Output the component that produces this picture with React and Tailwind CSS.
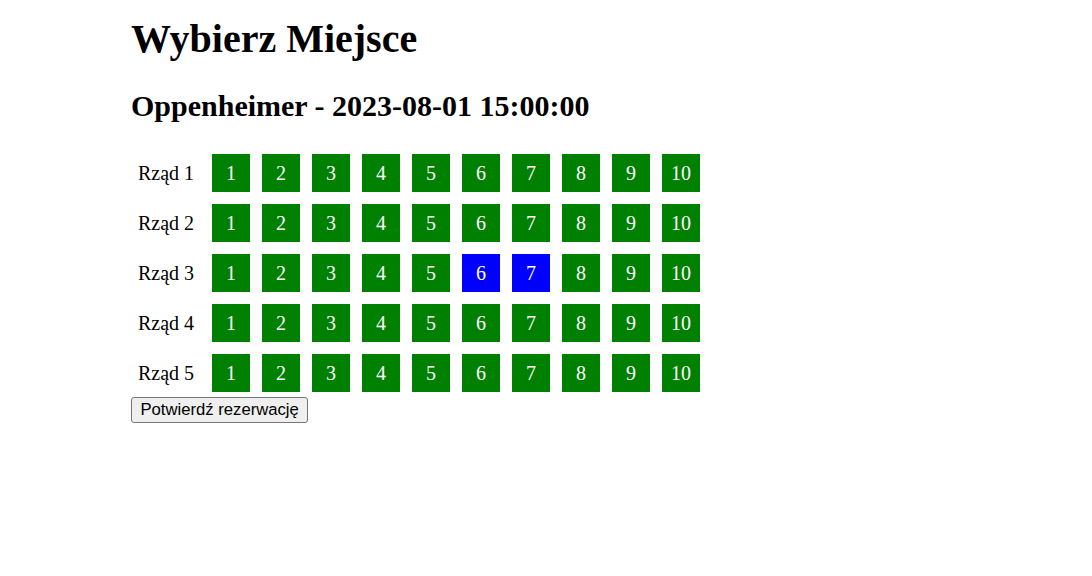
const rows = [1, 2, 3, 4, 5];
const seats = [1, 2, 3, 4, 5, 6, 7, 8, 9, 10];
const selected = { 3: [6, 7] };

export default function App() {
  return (
    <div className="min-h-screen bg-white text-black" style={{ fontFamily: '"Liberation Serif", serif' }}>
      <div className="mx-auto w-[830px]">
        <h1 className="mt-[16px] text-[40px] font-bold leading-[46px]">Wybierz Miejsce</h1>
        <h2 className="mt-[26px] text-[30px] font-bold leading-[35px]">Oppenheimer - 2023-08-01 15:00:00</h2>

        <div className="mt-[31px] flex flex-col gap-[12px]">
          {rows.map((r) => (
            <div key={r} className="flex items-center">
              <div className="w-[81px] pl-[7px] text-[20px] leading-[normal]">Rząd {r}</div>
              <div className="flex gap-[12px]">
                {seats.map((s) => {
                  const isSel = selected[r]?.includes(s);
                  return (
                    <div
                      key={s}
                      className={
                        isSel
                          ? 'flex h-[38px] w-[38px] items-center justify-center bg-[#0000ff] text-[20px] text-white'
                          : 'flex h-[38px] w-[38px] items-center justify-center bg-[#008000] text-[20px] text-white'
                      }
                    >
                      {s}
                    </div>
                  );
                })}
              </div>
            </div>
          ))}
        </div>

        <button
          className="mt-[5px] flex h-[26px] items-center rounded-[3px] border border-[#767676] bg-[#efefef] px-[8.5px] text-[16.67px] leading-[normal]"
          style={{ fontFamily: '"Liberation Sans", Arial, sans-serif' }}
        >
          Potwierdź rezerwację
        </button>
      </div>
    </div>
  );
}
